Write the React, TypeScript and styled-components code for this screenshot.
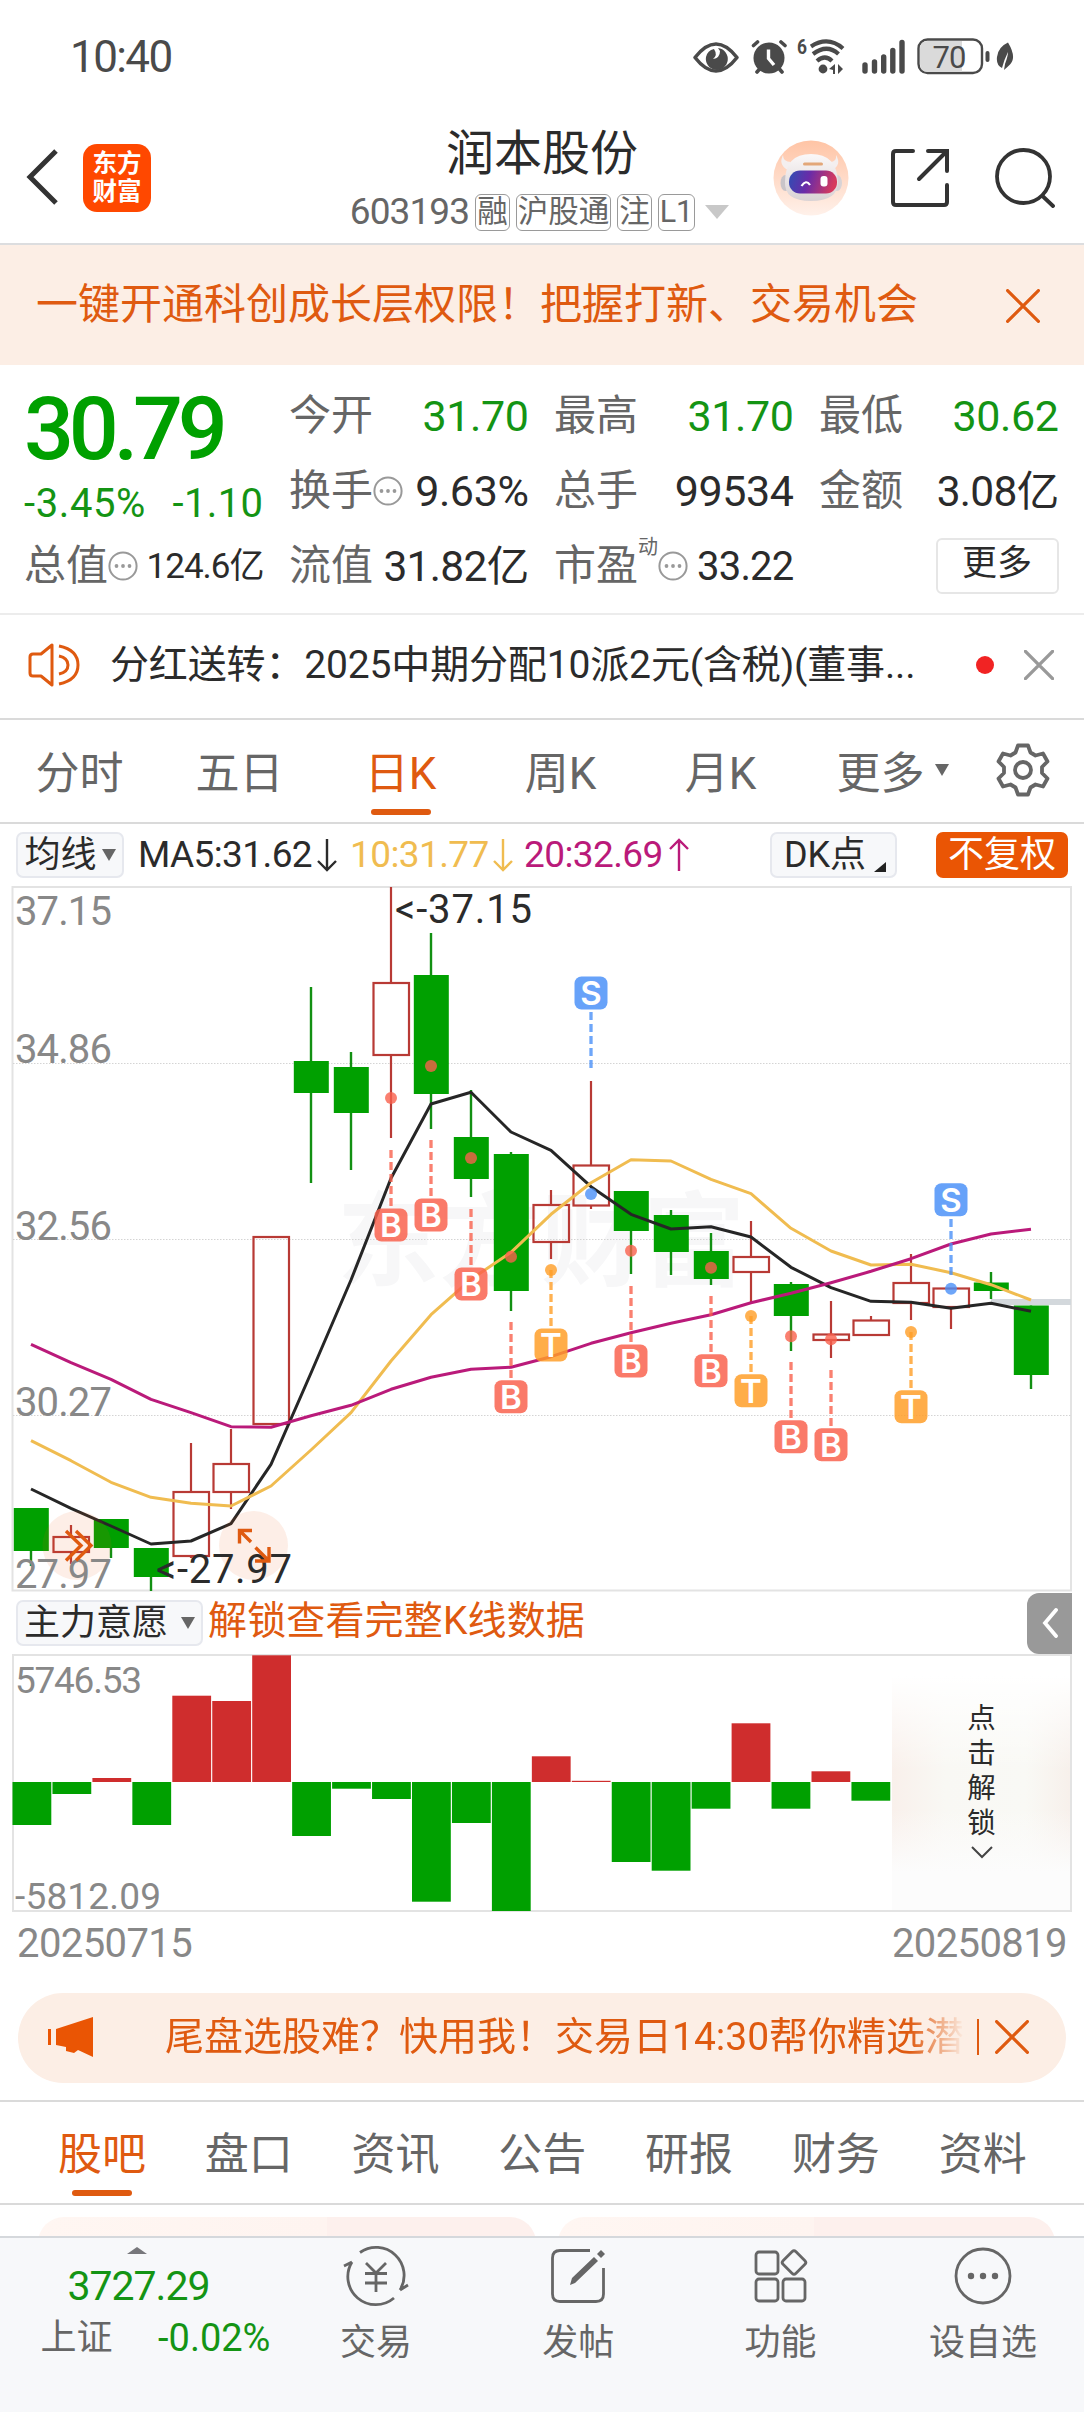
import React from "react";
import styled, { createGlobalStyle } from "styled-components";

const ORANGE = "#df5a10";
const GREEN = "#00a000";
const TEXT_GREEN = "#149414";
const GREY = "#666";
const INK = "#2b2b2b";
const FONT = 'Roboto, "Noto Sans CJK SC", sans-serif';

const Global = createGlobalStyle`
  * { box-sizing: border-box; }
  body { margin: 0; background: #fff; font-family: ${FONT}; color: ${INK}; }
  svg { display: block; flex: none; }
`;

const Page = styled.main`
  width: 1084px;
  height: 2412px;
  overflow: hidden;
  display: flex;
  flex-direction: column;
  background: #fff;
  white-space: nowrap;
`;

const Txt = styled.span<{ $size: number; $color?: string; $ls?: number; $weight?: number }>`
  font-size: ${(p) => p.$size}px;
  line-height: 1.2;
  color: ${(p) => p.$color ?? INK};
  letter-spacing: ${(p) => p.$ls ?? 0}px;
  font-weight: ${(p) => p.$weight ?? 400};
`;

/* ---------- status bar ---------- */
const StatusBar = styled.div`
  height: 115px;
  flex: none;
  display: flex;
  align-items: center;
  justify-content: space-between;
  padding: 0 70px 0 70px;
`;
const StatusIcons = styled.div`
  display: flex;
  align-items: center;
  height: 40px;
  margin-bottom: 4px;
`;

const StatusGlyphs = () => (
  <svg width="324" height="40" viewBox="690 35 324 40">
    <g fill="none" stroke="#4a4a4a" strokeLinecap="round">
      <path d="M695 56.500Q716 29.500 737 56.500Q716 83.500 695 56.500Z" strokeWidth="3.6" strokeLinejoin="round" />
      <path d="M753.500 44.500l4-3.500M785 44.500l-4-3.500M757 71l3-3.500M782 71l-3-3.500" strokeWidth="3.600" />
      <path d="M811 45.500Q828 34.500 843 47.500M813 53Q827 42.500 838.500 53M817 60Q825 53 832 60" strokeWidth="4.200" strokeLinecap="butt" />
      <path d="M865 64v6M874.500 61v9M883.700 56v14M892.800 49.500v20.500M902 41.500v28.500" strokeWidth="5.4" />
    </g>
    <path d="M706 56a10.500 10.500 0 0 1 8-8q4 6-1 10 7-1 7-8l-2-3a11 11 0 1 1-12 9z" fill="#4a4a4a" />
    <circle cx="769" cy="57" r="15.500" fill="#4a4a4a" />
    <path d="M768.500 48.500v9l5.500 6.500" fill="none" stroke="#fff" strokeWidth="3.400" />
    <text x="797" y="52.500" fontSize="20" fontWeight="700" textLength="10" lengthAdjust="spacingAndGlyphs" fill="#4a4a4a" fontFamily={FONT}>6</text>
    <circle cx="823" cy="68" r="4.400" fill="#4a4a4a" />
    <path d="M829 68l6-5v10h-2v-4zM843 68l-5-5v10z" fill="#4a4a4a" />
    <rect x="918.500" y="38.500" width="63.500" height="33.500" rx="9" fill="#fff" stroke="#4a4a4a" strokeWidth="2.400" />
    <path d="M962 40h-34q-8 0-8 8v15q0 8 8 8h34z" fill="#dadada" />
    <text x="932.500" y="66.500" fontSize="31" letterSpacing="-1" fill="#4a4a4a" fontFamily={FONT}>70</text>
    <rect x="985.500" y="50" width="4" height="11" rx="2" fill="#4a4a4a" />
    <path d="M1008 41.500q9 15 2 22-3 3-6 5.500l1-6q3-8 3-12-4 8-6 16-6-3-5-11 1-10 11-14.500z" fill="#4a4a4a" />
  </svg>
);

/* ---------- header ---------- */
const Header = styled.header`
  height: 130px;
  flex: none;
  display: flex;
  align-items: center;
  border-bottom: 2px solid #dcdddf;
  padding-left: 26px;
`;
const Back = styled.div`
  margin-bottom: 4px;
`;
const Logo = styled.div`
  width: 68px;
  height: 68px;
  margin: 0 0 3px 25px;
  border-radius: 14px;
  background: #ff4800;
  color: #fff;
  display: flex;
  flex-direction: column;
  align-items: center;
  justify-content: center;
  font-size: 24.500px;
  line-height: 28px;
  font-weight: 700;
`;
const TitleBlock = styled.div`
  width: 396px;
  margin-left: 193px;
  height: 128px;
  display: flex;
  flex-direction: column;
  align-items: center;
`;
const Title = styled.h1`
  margin: 10px 0 0;
  font-size: 48px;
  line-height: 58px;
  font-weight: 400;
`;
const SubTitle = styled.div`
  display: flex;
  align-items: center;
  gap: 6px;
  margin: 10px 5px 0 0;
  height: 38px;
`;
const Tag = styled.span`
  height: 37px;
  padding: 0 1px;
  border: 1.500px solid #9a9a9a;
  border-radius: 6px;
  color: ${GREY};
  font-size: 30.500px;
  line-height: 34px;
`;
const HeaderIcons = styled.div`
  display: flex;
  align-items: center;
  margin: 0 0 2px 33px;
  gap: 42px;
`;

const Robot = () => (
  <svg width="76" height="76" viewBox="0 0 76 76">
    <defs>
      <linearGradient id="halo" x1="0" y1="0" x2="0" y2="1">
        <stop offset="0" stopColor="#ffc4a5" />
        <stop offset="1" stopColor="#fff1ea" />
      </linearGradient>
      <linearGradient id="visor" x1="0" y1="0" x2="1" y2="0.150">
        <stop offset="0" stopColor="#2e4fb4" />
        <stop offset="0.450" stopColor="#6a2ba8" />
        <stop offset="1" stopColor="#d63a5e" />
      </linearGradient>
      <linearGradient id="shell" x1="0" y1="0" x2="0" y2="1">
        <stop offset="0" stopColor="#fbf8f8" />
        <stop offset="1" stopColor="#d9d2d4" />
      </linearGradient>
    </defs>
    <circle cx="38" cy="38" r="37.500" fill="url(#halo)" />
    <ellipse cx="12.500" cy="43" rx="5" ry="8" fill="#c9c4c8" />
    <ellipse cx="64" cy="43" rx="5" ry="8" fill="#d8d3d6" />
    <path d="M10 15q0 7 8 7l-3 8q-10-5-5-15zM63 15q1 7-6 7l2 8q10-5 4-15z" fill="#f4efef" />
    <path d="M12 42q0-28 26-28t27 28q0 19-27 19T12 42z" fill="url(#shell)" />
    <rect x="16" y="30.500" width="48" height="23" rx="11" fill="url(#visor)" />
    <rect x="30" y="22.500" width="20" height="3" rx="1.500" fill="#e3a779" />
    <path d="M28.500 46q4.500-7 8.500-1" fill="none" stroke="#fff" strokeWidth="2.200" />
    <rect x="47.500" y="36" width="7" height="10.500" rx="3" fill="#fff" />
  </svg>
);

/* ---------- banner ---------- */
const Banner = styled.div`
  height: 120px;
  flex: none;
  display: flex;
  align-items: center;
  justify-content: space-between;
  padding: 1px 44px 0 36px;
  background: #fceee5;
`;

const Cross = ({ size, color, width = 3 }: { size: number; color: string; width?: number }) => (
  <svg width={size} height={size} viewBox="0 0 32 32">
    <path d="M1.500 1.500l29 29M30.500 1.500l-29 29" stroke={color} strokeWidth={width} fill="none" strokeLinecap="round" />
  </svg>
);

/* ---------- quote ---------- */
const Quote = styled.section`
  height: 250px;
  flex: none;
  display: grid;
  grid-template-columns: repeat(4, 239.500px);
  column-gap: 25.500px;
  padding: 14px 24px 0;
  border-bottom: 2px solid #ececec;
`;
const QuoteCol = styled.div`
  display: flex;
  flex-direction: column;
`;
const QuoteRow = styled.div<{ $h?: number }>`
  height: ${(p) => p.$h ?? 75}px;
  display: flex;
  align-items: center;
  justify-content: space-between;
`;
const LabelGroup = styled.span`
  display: flex;
  align-items: center;
`;
const Sup = styled.span`
  font-size: 20px;
  line-height: 20px;
  color: ${GREY};
  align-self: flex-start;
  margin-top: -4px;
`;
const MoreButton = styled.button`
  width: 123px;
  height: 56px;
  margin: 0 0 2px auto;
  border: 2px solid #e6e6e6;
  border-radius: 6px;
  background: #fff;
  color: ${INK};
  font: 400 35px/46px ${FONT};
  padding: 0 0 3px;
`;
const Info = () => (
  <svg width="30" height="30" viewBox="0 0 30 30">
    <circle cx="15" cy="15" r="13.600" fill="none" stroke="#999" strokeWidth="2" />
    <g fill="#999">
      <circle cx="8.500" cy="15" r="1.900" />
      <circle cx="15" cy="15" r="1.900" />
      <circle cx="21.500" cy="15" r="1.900" />
    </g>
  </svg>
);
const Cell = ({ label, value, color, info, sup, size = 43, ls = -0.4 }: {
  label: string; value: string; color?: string; info?: boolean; sup?: string; size?: number; ls?: number;
}) => (
  <QuoteRow>
    <LabelGroup>
      <Txt $size={42} $color={GREY}>{label}</Txt>
      {sup && <Sup>{sup}</Sup>}
      {info && <Info />}
    </LabelGroup>
    <Txt $size={size} $color={color} $ls={ls}>{value}</Txt>
  </QuoteRow>
);

/* ---------- news ---------- */
const News = styled.section`
  height: 105px;
  flex: none;
  display: flex;
  align-items: center;
  padding: 0 30px 3px 28px;
  border-bottom: 2px solid #dadada;
`;
const NewsText = styled.span`
  flex: none;
  width: 815px;
  margin-left: 30px;
  font-size: 39px;
  line-height: 50px;
  letter-spacing: -0.150px;
`;
const Dot = styled.i`
  flex: none;
  width: 18px;
  height: 18px;
  border-radius: 50%;
  background: #f12323;
  margin: 0 30px 0 51px;
`;

/* ---------- period tabs ---------- */
const Periods = styled.nav`
  height: 104px;
  flex: none;
  display: flex;
  border-bottom: 2px solid #dadada;
`;
const Tab = styled.div<{ $w: number; $active?: boolean }>`
  position: relative;
  width: ${(p) => p.$w}px;
  display: flex;
  align-items: center;
  justify-content: center;
  gap: 10px;
  font-size: 44px;
  color: ${(p) => (p.$active ? ORANGE : GREY)};
  padding: 0 1px 3px 0;
  &::after {
    content: "";
    display: ${(p) => (p.$active ? "block" : "none")};
    position: absolute;
    left: calc(50% - 30px);
    bottom: 7px;
    width: 60px;
    height: 6px;
    border-radius: 3px;
    background: ${ORANGE};
  }
`;
const Down = styled.i<{ $w?: number; $h?: number; $color?: string; $ml?: number }>`
  border: solid transparent;
  border-width: ${(p) => p.$h ?? 12}px ${(p) => (p.$w ?? 14) / 2}px 0;
  border-top-color: ${(p) => p.$color ?? GREY};
  margin-left: ${(p) => p.$ml ?? 0}px;
`;

/* ---------- indicators ---------- */
const IndicatorRow = styled.div`
  height: 62px;
  flex: none;
  display: flex;
  align-items: center;
  padding: 0 16px;
`;
const Chip = styled.div<{ $w: number; $solid?: boolean; $gap?: number; $ml?: number }>`
  width: ${(p) => p.$w}px;
  height: 46px;
  margin-left: ${(p) => p.$ml ?? 0}px;
  display: flex;
  align-items: center;
  justify-content: center;
  gap: ${(p) => p.$gap ?? 5}px;
  border: ${(p) => (p.$solid ? "none" : "2px solid #e6e8ee")};
  border-radius: 7px;
  background: ${(p) => (p.$solid ? "#ea5504" : "#f7f8fa")};
  color: ${(p) => (p.$solid ? "#fff" : INK)};
  font-size: 36px;
  line-height: 42px;
`;
const Corner = styled.i`
  align-self: flex-end;
  border: solid transparent;
  border-width: 0 0 10px 12px;
  border-bottom-color: #222;
  margin: 0 -3px 4px 3px;
`;
const MaText = styled.span<{ $color: string; $ml: number; $w: number }>`
  width: ${(p) => p.$w}px;
  margin-left: ${(p) => p.$ml}px;
  font-size: 37px;
  letter-spacing: -0.600px;
  color: ${(p) => p.$color};
  line-height: 44px;
  display: flex;
  justify-content: space-between;
  align-items: center;
`;
const Arrow = ({ up, color }: { up?: boolean; color: string }) => (
  <svg width="22" height="34" viewBox="0 0 22 34">
    <path d={up ? "M11 33V2M2 11l9-9 9 9" : "M11 1v31M2 23l9 9 9-9"} fill="none" stroke={color} strokeWidth="2.400" />
  </svg>
);

/* ---------- candle chart ---------- */
const cx = (i: number) => 31 + 40 * i;
// [rising, body top, body bottom, high, low]
const candles: [number, number, number, number, number][] = [
  [0, 1508, 1551, 1508, 1566], [1, 1537, 1552, 1525, 1564], [0, 1519, 1548, 1519, 1558], [0, 1548, 1577, 1548, 1591],
  [1, 1492, 1556, 1443, 1558], [1, 1464, 1492, 1429, 1509], [1, 1237, 1424, 1237, 1424], [0, 1061, 1093, 987, 1183],
  [0, 1067, 1113, 1052, 1170], [1, 983, 1055, 887, 1138], [0, 975, 1094, 933, 1129], [0, 1137, 1179, 1090, 1197],
  [0, 1154, 1291, 1152, 1311], [1, 1205, 1242, 1190, 1259], [1, 1165.5, 1205.5, 1081, 1209], [0, 1191, 1231, 1191, 1274],
  [0, 1215, 1252, 1210, 1275], [0, 1251, 1279, 1233, 1285], [1, 1257, 1272, 1221, 1302], [0, 1284, 1316, 1282, 1351],
  [1, 1334.5, 1340, 1301, 1358], [1, 1320.5, 1335, 1316, 1335], [1, 1283, 1303, 1254, 1320], [1, 1288.5, 1307, 1288.5, 1329],
  [0, 1282.5, 1291, 1272, 1299], [0, 1305.5, 1375, 1305.5, 1389],
];
const ma5 = [1489, 1508.3, 1526, 1544, 1541, 1523.7, 1464.3, 1373, 1280, 1178.3, 1104, 1092.3, 1132, 1150.3, 1186.7, 1214.3, 1229, 1226.7, 1237, 1267.3, 1287.7, 1301.3, 1302.3, 1308.3, 1303.3, 1311.3];
const ma10 = [1440.7, 1460.7, 1482.3, 1497.3, 1503.3, 1506, 1486, 1450, 1412.7, 1361, 1314.7, 1279.3, 1252.3, 1214.3, 1182.7, 1159.7, 1161, 1179.3, 1193.7, 1228.3, 1251, 1265, 1264.3, 1272.7, 1284.7, 1300];
const ma20 = [1344.3, 1362.7, 1379.3, 1399.3, 1412.7, 1426.7, 1427.3, 1415.7, 1405.3, 1389.3, 1377.3, 1369.3, 1367.3, 1356.7, 1343.3, 1332.7, 1323.3, 1314.7, 1302.7, 1293.3, 1282.7, 1271.3, 1258.7, 1244, 1234, 1229.3];
const line = (v: number[]) => v.map((y, i) => `${cx(i)},${y}`).join(" ");

// [candle index, letter, dot y, dash start, dash end, badge centre y]
const marks: [number, "B" | "S" | "T", number, number, number, number][] = [
  [9, "B", 1098, 1150, 1206, 1225], [10, "B", 1066, 1140, 1196, 1215], [11, "B", 1158, 1209, 1265, 1284],
  [12, "B", 1256.700, 1322, 1378, 1396.700], [13, "T", 1270, 1270, 1326, 1345], [14, "S", 1194, 1012, 1068, 993],
  [15, "B", 1250.700, 1286, 1342, 1361], [17, "B", 1267.700, 1296, 1352, 1370.700], [18, "T", 1316, 1316, 1372, 1390.700],
  [19, "B", 1336.300, 1362, 1418, 1436.700], [20, "B", 1339.300, 1370, 1426, 1444.700], [22, "T", 1332, 1332, 1388, 1406.700],
  [23, "S", 1288.700, 1219, 1275, 1199.700],
];
const markColor = { B: "#f9604c", S: "#4a90f8", T: "#ff9d26" };

const CandleChart = () => (
  <svg width="1084" height="706" viewBox="0 886 1084 706" fontFamily={FONT}>
    <text x="337" y="1278" fontSize="102" fontWeight="700" fill="#f7f7f8">东方财富</text>
    <rect x="12.500" y="887" width="1058.500" height="703.500" fill="none" stroke="#e3e3e3" strokeWidth="2" />
    {[1063.5, 1239.5, 1415.5].map((y) => (
      <path key={y} d={`M13 ${y}H1071`} stroke="#d4d4d4" strokeWidth="1" strokeDasharray="1.500 1.500" />
    ))}
    <g fontSize="40" fill="#888" letterSpacing="-0.900">
      <text x="15" y="925">37.15</text>
      <text x="15" y="1063">34.86</text>
      <text x="15" y="1239.500">32.56</text>
      <text x="15" y="1415.500">30.27</text>
    </g>
    <rect x="991" y="1299" width="80" height="6" fill="#d3d8dc" />
    {candles.map(([up, t, b, h, l], i) =>
      up ? (
        <g key={i} stroke="#b83a35" strokeWidth="2.200" fill="none">
          <path d={`M${cx(i)} ${h}V${t}M${cx(i)} ${b}V${l}`} />
          <rect x={cx(i) - 17.5} y={t} width="35.500" height={b - t} />
        </g>
      ) : (
        <g key={i} fill={GREEN}>
          <path d={`M${cx(i)} ${h}V${l}`} stroke="#129012" strokeWidth="2.400" />
          <rect x={cx(i) - 17.2} y={t} width="35" height={b - t} />
        </g>
      ),
    )}
    <g fill="none" strokeWidth="3" strokeLinejoin="round">
      <polyline points={line(ma5)} stroke="#262626" />
      <polyline points={line(ma10)} stroke="#f0bc50" />
      <polyline points={line(ma20)} stroke="#ba1a7a" />
    </g>
    {marks.map(([i, k, dot, a, b, c]) => (
      <g key={i}>
        <path d={`M${cx(i)} ${a}V${b}`} stroke={markColor[k]} strokeOpacity="0.800" strokeWidth="3.300" strokeDasharray="8 4" />
        <circle cx={cx(i)} cy={dot} r="6" fill={markColor[k]} fillOpacity="0.800" />
        <rect x={cx(i) - 16.5} y={c - 16.5} width="33" height="33" rx="7" fill={markColor[k]} fillOpacity="0.840" />
        <text x={cx(i)} y={c + 12} textAnchor="middle" fontSize="33" fontWeight="600" fontFamily="Inter, sans-serif" fill="#fff">{k}</text>
      </g>
    ))}
    <g fill="#ee5a10" fillOpacity="0.100">
      <circle cx="77" cy="1545.500" r="34.500" />
      <circle cx="253.500" cy="1545.500" r="34.500" />
    </g>
    <text x="15" y="1588" fontSize="40" fill="#888" letterSpacing="-0.900">27.97</text>
    <g fontSize="40" fill={INK}>
      <text x="395" y="923" textLength="137">&lt;-37.15</text>
      <text x="156" y="1583" textLength="136">&lt;-27.97</text>
    </g>
    <g fill="none" stroke={ORANGE} strokeWidth="3.400">
      <path d="M66 1531l15 14.500-15 15M76 1531l15 14.500-15 15" />
      <path d="M252 1530.500h-12.500v13M240 1531l11 11M269 1547v14h-14M268.500 1560.500l-13-13" />
    </g>
  </svg>
);

/* ---------- willingness chart ---------- */
const UnlockHint = styled.span`
  margin: 0 0 4px 5px;
  font-size: 39px;
  line-height: 46px;
  letter-spacing: 0.150px;
  color: ${ORANGE};
`;
const SideHandle = styled.div`
  width: 45px;
  height: 61px;
  margin: 0 -4px 0 auto;
  border-radius: 12px 0 0 12px;
  background: #999;
  display: flex;
  align-items: center;
  justify-content: center;
`;
const BarPanel = styled.section`
  height: 258px;
  flex: none;
  margin: 0 12px;
  border: 2px solid #e3e3e3;
  display: flex;
`;
const Unlock = styled.div`
  flex: 1;
  display: flex;
  flex-direction: column;
  align-items: center;
  padding: 45px 0 0 1px;
  font-size: 28.500px;
  line-height: 35px;
  background:
    linear-gradient(180deg, #fff 8%, rgba(255, 255, 255, 0) 45%, rgba(255, 255, 255, 0) 60%, #fcfcfc 85%),
    linear-gradient(90deg, #f9f0eb, #f9f8f4 30%, #f9f9f5 75%, #f7f0eb);
`;
const bars = [1825, 1794, 1778, 1825, 1695.7, 1701, 1655.3, 1836, 1788.7, 1799, 1901.7, 1823, 1911, 1756.3, 1780.8, 1862, 1870.7, 1808.7, 1723.3, 1808.7, 1771.3, 1800.7];
const ZERO = 1782;
const BarChart = () => (
  <svg width="878" height="254" viewBox="14 1656 878 254" fontFamily={FONT} overflow="visible">
    {bars.map((y, i) => (
      <rect
        key={i}
        x={12.5 + 39.95 * i}
        y={Math.min(y, ZERO)}
        width="38.800"
        height={Math.abs(y - ZERO)}
        fill={y < ZERO ? "#cf2d2d" : GREEN}
      />
    ))}
    <g fontSize="37" fill="#888">
      <text x="15" y="1693" textLength="127">5746.53</text>
      <text x="15" y="1909" textLength="146">-5812.09</text>
    </g>
  </svg>
);
const Dates = styled.div`
  height: 61px;
  flex: none;
  display: flex;
  justify-content: space-between;
  align-items: center;
  padding: 2px 17px 0 17px;
`;

/* ---------- promo ---------- */
const Promo = styled.div`
  height: 90px;
  flex: none;
  margin: 20px 18px 17px;
  border-radius: 45px;
  background: #fceee5;
  display: flex;
  align-items: center;
  padding: 0 37px 3px 29px;
`;
const PromoText = styled.div`
  width: 800px;
  margin-left: 69px;
  overflow: hidden;
  font-size: 39px;
  line-height: 50px;
  color: ${ORANGE};
  mask-image: linear-gradient(90deg, #000 93%, transparent);
`;
const Divider = styled.i`
  width: 1.500px;
  height: 36px;
  background: ${ORANGE};
  margin: 0 16px 0 12px;
`;

/* ---------- info tabs + cards ---------- */
const InfoTabs = styled.nav`
  height: 105px;
  flex: none;
  display: flex;
  padding-left: 29px;
  border-top: 2px solid #dadada;
  border-bottom: 2px solid #dadada;
`;
const Cards = styled.div`
  height: 31px;
  flex: none;
  overflow: hidden;
  display: flex;
  gap: 22px;
  padding: 12px 29px 0 38px;
`;
const Card = styled.div<{ $split: number }>`
  width: 497.500px;
  height: 80px;
  border-radius: 26px;
  background: linear-gradient(90deg, #fff6f2, #fef4f0 ${(p) => p.$split}%, #fdf0ed ${(p) => p.$split}%);
`;

/* ---------- bottom bar ---------- */
const BottomBar = styled.footer`
  flex: 1;
  display: flex;
  background: #f7f8fa;
  border-top: 2px solid #d5d8dc;
`;
const IndexBlock = styled.div`
  width: 275px;
  display: flex;
  flex-direction: column;
  align-items: center;
  padding-top: 9px;
`;
const IndexValue = styled.div`
  margin: 8px 0 0 2px;
  font-size: 41px;
  line-height: 49px;
  letter-spacing: -1px;
  color: ${TEXT_GREEN};
`;
const IndexRow = styled.div`
  width: 230px;
  display: flex;
  justify-content: space-between;
  align-items: center;
  margin: 5px 0 0 36px;
`;
const UpMark = styled.i`
  border: solid transparent;
  border-width: 0 10px 7px;
  border-bottom-color: #77777b;
`;
const Action = styled.div`
  width: 202.300px;
  display: flex;
  flex-direction: column;
  align-items: center;
  padding-top: 7px;
  gap: 15px;
`;
const ActionSvg = ({ children }: { children: React.ReactNode }) => (
  <svg width="66" height="62" viewBox="-33 -31 66 62" fill="none" stroke="#666" strokeWidth="2.800">{children}</svg>
);

const infoTabs = ["股吧", "盘口", "资讯", "公告", "研报", "财务", "资料"];

export default function App() {
  return (
    <Page>
      <Global />
      <StatusBar>
        <Txt $size={44} $color="#4a4a4a" $ls={-1.6}>10:40</Txt>
        <StatusIcons><StatusGlyphs /></StatusIcons>
      </StatusBar>

      <Header>
        <Back>
          <svg width="32" height="56" viewBox="0 0 32 56">
            <path d="M30 2L4 28l26 26" fill="none" stroke="#333" strokeWidth="5" />
          </svg>
        </Back>
        <Logo><span>东方</span><span>财富</span></Logo>
        <TitleBlock>
          <Title>润本股份</Title>
          <SubTitle>
            <Txt $size={37} $color={GREY} $ls={-0.9}>603193</Txt>
            <Tag>融</Tag><Tag>沪股通</Tag><Tag>注</Tag><Tag>L1</Tag>
            <Down $w={24} $h={14} $ml={4} $color="#c8c8c8" />
          </SubTitle>
        </TitleBlock>
        <HeaderIcons>
          <Robot />
          <svg width="58" height="58" viewBox="0 0 58 58" fill="none" stroke="#333" strokeWidth="4" strokeLinecap="round">
            <path d="M22 2H5Q2 2 2 5v48q0 3 3 3h48q3 0 3-3V36M37 2h19v20M55 3L28 30" />
          </svg>
          <svg width="64" height="60" viewBox="-4 0 64 60" fill="none" stroke="#333" strokeWidth="3.800" strokeLinecap="round">
            <circle cx="28.500" cy="28.500" r="26.500" />
            <path d="M47.500 48L58 58" />
          </svg>
        </HeaderIcons>
      </Header>

      <Banner>
        <Txt $size={42} $color={ORANGE}>一键开通科创成长层权限！把握打新、交易机会</Txt>
        <Cross size={34} color={ORANGE} />
      </Banner>

      <Quote>
        <QuoteCol>
          <QuoteRow $h={100}><Txt $size={88} $color={GREEN} $ls={-5.2} $weight={500}>30.79</Txt></QuoteRow>
          <QuoteRow $h={50}>
            <Txt $size={40} $color={TEXT_GREEN} $ls={0.6}>-3.45%</Txt>
            <Txt $size={40} $color={TEXT_GREEN} $ls={0.4}>-1.10</Txt>
          </QuoteRow>
          <Cell label="总值" value="124.6亿" info size={35} ls={-1} />
        </QuoteCol>
        <QuoteCol>
          <Cell label="今开" value="31.70" color={TEXT_GREEN} />
          <Cell label="换手" value="9.63%" info />
          <Cell label="流值" value="31.82亿" size={42.500} ls={-0.7} />
        </QuoteCol>
        <QuoteCol>
          <Cell label="最高" value="31.70" color={TEXT_GREEN} />
          <Cell label="总手" value="99534" />
          <Cell label="市盈" value="33.22" sup="动" info size={40} ls={-0.8} />
        </QuoteCol>
        <QuoteCol>
          <Cell label="最低" value="30.62" color={TEXT_GREEN} />
          <Cell label="金额" value="3.08亿" size={42.500} ls={-0.7} />
          <QuoteRow><MoreButton>更多</MoreButton></QuoteRow>
        </QuoteCol>
      </Quote>

      <News>
        <svg width="52" height="44" viewBox="0 0 52 44" fill="none" stroke={ORANGE} strokeWidth="3">
          <path d="M24 2v40L13 33H5q-3 0-3-3V14q0-3 3-3h8z" strokeLinejoin="round" />
          <path d="M31 3q19 4 19 19T31 41M31 13q9 2 9 9t-9 9" />
        </svg>
        <NewsText>分红送转：2025中期分配10派2元(含税)(董事...</NewsText>
        <Dot />
        <Cross size={30} color="#999" width={3.6} />
      </News>

      <Periods>
        <Tab $w={160}>分时</Tab>
        <Tab $w={160}>五日</Tab>
        <Tab $w={162} $active>日K</Tab>
        <Tab $w={158}>周K</Tab>
        <Tab $w={162}>月K</Tab>
        <Tab $w={182}>更多<Down /></Tab>
        <Tab $w={78}>
          <svg width="54" height="54" viewBox="-27 -27 54 54" fill="none" stroke="#666" strokeWidth="3.800">
            <path strokeLinejoin="round" d="M-5-24.500H5L7.500-17.500 12.500-14.500 20-16.500 24.500-8.500 19-3V3L24.500 8.500 20 16.500 12.500 14.500 7.500 17.500 5 24.500H-5L-7.500 17.500-12.500 14.500-20 16.500-24.500 8.500-19 3V-3L-24.500-8.500-20-16.500-12.500-14.500-7.500-17.500Z" />
            <circle r="8" />
          </svg>
        </Tab>
      </Periods>

      <IndicatorRow>
        <Chip $w={108}>均线<Down /></Chip>
        <MaText $color={INK} $ml={14} $w={200}>MA5:31.62<Arrow color={INK} /></MaText>
        <MaText $color="#f0bc50" $ml={12} $w={164}>10:31.77<Arrow color="#f0bc50" /></MaText>
        <MaText $color="#ba1a7a" $ml={10} $w={166}>20:32.69<Arrow up color="#ba1a7a" /></MaText>
        <Chip $w={127} $ml={80}>DK点<Corner /></Chip>
        <Chip $w={132} $ml={39} $solid>不复权</Chip>
      </IndicatorRow>
      <CandleChart />

      <IndicatorRow>
        <Chip $w={187} $gap={13}>主力意愿<Down /></Chip>
        <UnlockHint>解锁查看完整K线数据</UnlockHint>
        <SideHandle>
          <svg width="16" height="30" viewBox="0 0 16 30">
            <path d="M14 2L3 15l11 13" fill="none" stroke="#fff" strokeWidth="3.800" strokeLinecap="round" />
          </svg>
        </SideHandle>
      </IndicatorRow>
      <BarPanel>
        <BarChart />
        <Unlock>
          <span>点</span><span>击</span><span>解</span><span>锁</span>
          <svg width="24" height="22" viewBox="0 0 24 22"><path d="M2 6l10 10 10-10" fill="none" stroke="#444" strokeWidth="2" /></svg>
        </Unlock>
      </BarPanel>
      <Dates>
        <Txt $size={40} $color="#888" $ls={-0.6}>20250715</Txt>
        <Txt $size={40} $color="#888" $ls={-0.6}>20250819</Txt>
      </Dates>

      <Promo>
        <svg width="49" height="40" viewBox="0 0 49 40" fill="#ea5504">
          <path d="M1 12h3v16H1zM9 12L46 0v40L31 33l-4 3-8-2v-4L9 28z" />
        </svg>
        <PromoText>尾盘选股难？快用我！交易日14:30帮你精选潜力股</PromoText>
        <Divider />
        <Cross size={34} color={ORANGE} />
      </Promo>

      <InfoTabs>
        {infoTabs.map((t, i) => <Tab key={t} $w={146.8} $active={i === 0}>{t}</Tab>)}
      </InfoTabs>
      <Cards><Card $split={58} /><Card $split={51.5} /></Cards>

      <BottomBar>
        <IndexBlock>
          <UpMark />
          <IndexValue>3727.29</IndexValue>
          <IndexRow>
            <Txt $size={36} $color={GREY}>上证</Txt>
            <Txt $size={38} $color={TEXT_GREEN}>-0.02%</Txt>
          </IndexRow>
        </IndexBlock>
        <Action>
          <ActionSvg>
            <path d="M-16-23.500A28 28 0 0 1 24 14M24 14l8-5M18 22A28 28 0 0 1-24-14M-24-14l-8 4" />
            <path d="M-10-13L0-3 10-13M0-3v19M-11-2.500H11M-11 7H11" />
          </ActionSvg>
          <Txt $size={36} $color={GREY}>交易</Txt>
        </Action>
        <Action>
          <ActionSvg>
            <path d="M12-25.500H-18q-7.500 0-7.500 7.500V18q0 7.500 7.500 7.500H18q7.500 0 7.500-7.500V-8" />
            <path d="M-8 9l2-7L16-19l4 4L-3 7zM19-22l4-4 4 4-4 4z" fill="#666" stroke="none" />
          </ActionSvg>
          <Txt $size={36} $color={GREY}>发帖</Txt>
        </Action>
        <Action>
          <ActionSvg>
            <rect x="-25" y="-24" width="22" height="22" rx="3" />
            <rect x="-25" y="3" width="22" height="22" rx="3" />
            <rect x="2" y="3" width="22" height="22" rx="3" />
            <rect x="4" y="-22.500" width="18" height="18" rx="2.500" transform="rotate(45 13 -13.500)" />
          </ActionSvg>
          <Txt $size={36} $color={GREY}>功能</Txt>
        </Action>
        <Action>
          <ActionSvg>
            <circle r="27" />
            <g fill="#666" stroke="none"><circle cx="-12" r="3.200" /><circle r="3.200" /><circle cx="12" r="3.200" /></g>
          </ActionSvg>
          <Txt $size={36} $color={GREY}>设自选</Txt>
        </Action>
      </BottomBar>
    </Page>
  );
}
